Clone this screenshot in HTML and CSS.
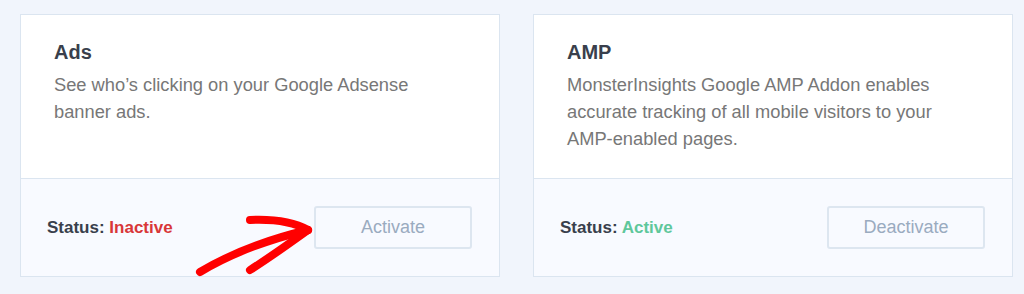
FILE: index.html
```html
<!DOCTYPE html>
<html lang="en">
<head>
    <meta charset="UTF-8">
    <meta name="viewport" content="width=device-width, initial-scale=1.0">
    <title>Addons - MonsterInsights</title>
    <link rel="stylesheet" href="styles.css">
</head>
<body>
    <div class="addons">
        <div class="addon">
            <div class="addon-body">
                <h3>Ads</h3>
                <p>See who’s clicking on your Google Adsense banner ads.</p>
            </div>
            <div class="addon-footer">
                <span class="status">Status: <span class="inactive">Inactive</span></span>
                <button>Activate</button>
            </div>
            <svg class="arrow" width="130" height="70" viewBox="0 0 130 70">
                <g fill="none" stroke="#ff0000" stroke-width="8" stroke-linecap="round" stroke-linejoin="round">
                    <path d="M10 62 C40 44, 72 31, 118 20"/>
                    <path d="M60 10 C82 9, 102 11, 118 20"/>
                    <path d="M60 60 C82 46, 100 33, 118 20"/>
                </g>
            </svg>
        </div>
        <div class="addon">
            <div class="addon-body">
                <h3>AMP</h3>
                <p>MonsterInsights Google AMP Addon enables accurate tracking of all mobile visitors to your AMP-enabled pages.</p>
            </div>
            <div class="addon-footer">
                <span class="status">Status: <span class="active">Active</span></span>
                <button>Deactivate</button>
            </div>
        </div>
    </div>
</body>
</html>
```

FILE: styles.css
```css
body {
    font-family: "Liberation Sans", Arial, sans-serif;
    margin: 0;
    background-color: #f1f5fc;
}
.addons {
    display: grid;
    grid-template-columns: 480px 480px;
    column-gap: 33px;
    padding: 14px 20px;
}
.addon {
    position: relative;
    display: flex;
    flex-direction: column;
    background: white;
    border: 1px solid #dbe5f0;
}
.addon-body {
    flex: 1;
    padding: 25px 42px 26px 33px;
}
h3 {
    margin: 0 0 7px;
    font-size: 20px;
    line-height: 24px;
    color: #393f4c;
}
p {
    margin: 0;
    font-size: 18.3px;
    line-height: 27px;
    color: #777;
}
.addon-footer {
    display: flex;
    justify-content: space-between;
    align-items: center;
    height: 97px;
    padding: 0 27px 0 26px;
    background-color: #f8faff;
    border-top: 1px solid #dbe5f0;
}
.status {
    font-size: 17px;
    font-weight: bold;
    color: #393f4c;
}
.inactive {
    color: #d83638;
}
.active {
    color: #5ec79b;
}
button {
    width: 158px;
    height: 43px;
    font-family: inherit;
    font-size: 18px;
    color: #9aabbf;
    background-color: #f8faff;
    border: 2px solid #dde6f0;
    border-radius: 3px;
    cursor: pointer;
}
.arrow {
    position: absolute;
    left: 169px;
    top: 195px;
}
```
